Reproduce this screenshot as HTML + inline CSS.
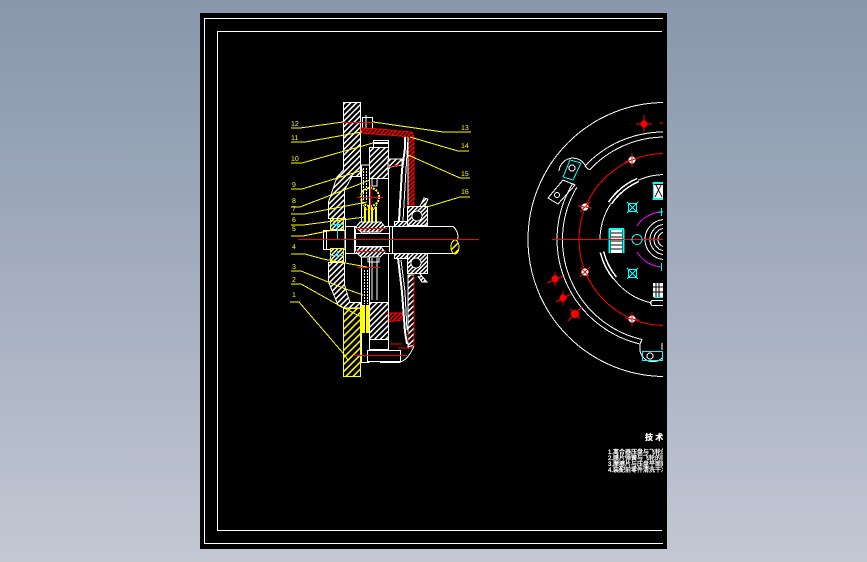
<!DOCTYPE html>
<html lang="zh">
<head>
<meta charset="utf-8">
<title>CAD drawing</title>
<style>
html,body{margin:0;padding:0;width:867px;height:562px;overflow:hidden;background:linear-gradient(180deg,#8897ac 0%,#a4aebf 50%,#c3c8d3 100%);}
svg{position:absolute;left:0;top:0;display:block;shape-rendering:crispEdges;}
text{font-family:"Liberation Sans","Noto Sans CJK SC",sans-serif;}
</style>
</head>
<body>
<svg width="867" height="562" viewBox="0 0 867 562" xmlns="http://www.w3.org/2000/svg">
<defs>
<pattern id="hw" width="4" height="4" patternUnits="userSpaceOnUse" patternTransform="rotate(45)"><rect width="4" height="4" fill="#000"/><rect width="1.400" height="4" fill="#fff"/></pattern>
<pattern id="hy" width="5" height="5" patternUnits="userSpaceOnUse" patternTransform="rotate(45)"><rect width="5" height="5" fill="#000"/><rect width="1.400" height="5" fill="#ff0"/></pattern>
<pattern id="hd" width="3" height="3" patternUnits="userSpaceOnUse" patternTransform="rotate(45)"><rect width="3" height="3" fill="#000"/><rect width="1.500" height="3" fill="#fff"/></pattern>
<pattern id="hr" width="3" height="3" patternUnits="userSpaceOnUse" patternTransform="rotate(45)"><rect width="3" height="3" fill="#000"/><rect width="1.500" height="3" fill="#f00"/></pattern>
<clipPath id="c"><rect x="200" y="13" width="463" height="536"/></clipPath>
</defs>

<rect x="200" y="13" width="467" height="536" fill="#000"/>
<g fill="none" stroke="#fff" stroke-width="1">
<path d="M663 18.500H204.500V543.500H663"/>
<path d="M662 31.500H217.500V530.500H662"/>
</g>

<!-- LEFT SECTION -->
<g fill="none" stroke="#fff" stroke-width="1">
<!-- flywheel -->
<path d="M343.500 102.500H360.500V176.500H352L344.500 190V218.500H328.500V202L337 177L343.500 170Z" fill="url(#hw)"/>
<path d="M328.500 262.500H344.500V285L350 302.500H360.500V308H343.500L338 305L328.500 282Z" fill="url(#hw)"/>
<rect x="343.500" y="308.500" width="17" height="68" fill="url(#hy)" stroke="#ff0"/>
<!-- bolt at top -->
<path d="M362.500 117.500H372.500V128.500H362.500Z M366 115V129"/>
<!-- cover -->
<path d="M361 128L380 129L398 131L412 132L414 137V205H408V137L400 136L361 133Z" fill="url(#hr)" stroke="#f00"/>
<path d="M408 205V137"/>
<path d="M408 275H414V345L408 347Z" fill="url(#hw)"/>
<path d="M414 275V345L411 348H398M408 332V342M390 344H402" stroke="#f00"/>
<path d="M367.500 350.500H400.500V361.500H367.500ZM380 362.500H400M400 362Q408 360 414 346"/>
<!-- pressure plate -->
<rect x="369.500" y="147.500" width="19" height="31" fill="url(#hw)"/>
<rect x="373.500" y="140.500" width="15" height="7"/>
<path d="M373.500 143H388.500" stroke-width="2"/>
<path d="M388 159H402V165L390 167L388 170Z" fill="url(#hw)"/>
<path d="M388 167L400 165" stroke="#f00"/>
<rect x="369.500" y="302.500" width="19" height="37" fill="url(#hw)"/>
<rect x="369.500" y="339.500" width="19" height="10"/>
<path d="M388 313H402V320L388 322Z" fill="url(#hr)" stroke="#f00"/>
<!-- verticals -->
<path d="M361.500 165V362.500H369.500M369.500 178V302M388.500 178V226M388.500 253V350M361.500 165H369.500"/>
<path d="M363.500 168V200M366.500 168V200M369.500 168V200" stroke-dasharray="2 1"/>
<path d="M364.500 270V304M367.500 270V304" stroke-dasharray="2 1"/>
<path d="M372 178V186H377V178M372 258V300M377 258V300"/>
<path d="M368 258V262H379V258"/>
<!-- yellow springs -->
<rect x="361" y="305" width="4" height="28" fill="#ff0" stroke="none"/>
<rect x="366" y="305" width="3" height="28" fill="#ff0" stroke="none"/>
<circle cx="370" cy="197" r="9" stroke="#ff0" stroke-width="2" stroke-dasharray="2 1"/>
<path d="M365 207V223H369V207M372 207V223H376V207" stroke="#ff0" stroke-width="2"/>
<path d="M363 205L367 210M377 205L373 210" stroke="#ff0"/>
<!-- diaphragm -->
<path d="M405 137V148L402 170L399 221" stroke-width="2"/>
<path d="M408 138L406 170L403 221"/>
<path d="M398 258L402 292L405 332L407 344" stroke-width="2"/>
<path d="M401 260L405 292L407 330"/>
<!-- bearing -->
<rect x="407.500" y="206.500" width="20" height="19" fill="url(#hd)"/>
<circle cx="417" cy="216" r="5" fill="#000"/>
<path d="M420 206L424 198L428 199L425 206" fill="url(#hd)"/>
<rect x="407.500" y="253.500" width="20" height="20" fill="url(#hd)"/>
<circle cx="416" cy="263" r="5" fill="#000"/>
<path d="M420 274L427 282H422L418 276" fill="url(#hd)"/>
<rect x="394.500" y="221.500" width="13" height="5" fill="url(#hd)"/>
<rect x="394.500" y="253.500" width="13" height="5" fill="url(#hd)"/>
<!-- shaft -->
<path d="M345 226.500H453C458 231 459 236 457 241M345 253.500H453L458 247"/>
<path d="M323.500 230.500V249.500H345V230.500H323.500ZM326.500 230.500V249"/>
<path d="M345.500 218V262M354.500 226V253M392.500 226V253"/>
<!-- hub -->
<path d="M356 227L360 222H381L385 227L380 232H361Z" fill="url(#hd)"/>
<path d="M356 252L360 247H381L385 252L380 257H361Z" fill="url(#hd)"/>
<rect x="356" y="233" width="33" height="13" fill="#000" stroke="none"/>
<path d="M355.500 227V252M389.500 227V252"/>
<path d="M355 233.500H389M355 246.500H389"/>
<!-- small boxes -->
<rect x="330.500" y="218.500" width="13" height="11" fill="url(#hd)" stroke="#ff0"/>
<rect x="330.500" y="248.500" width="13" height="13" fill="url(#hd)" stroke="#ff0"/>
<!-- shaft yellow end -->
<ellipse cx="455" cy="247" rx="4" ry="7" fill="url(#hy)" stroke="#ff0"/>
</g>

<!-- centre lines -->
<g fill="none" stroke="#f00" stroke-width="1">
<path d="M298 239.500H479"/>
<path d="M338 122.500H373"/>
<path d="M357 197.500H383M370.500 185V210"/>
<path d="M357 267.500H380"/>
<path d="M355 228.500H387M355 251.500H386"/>
<path d="M353 355.500H407"/>
</g>
<g fill="none" stroke="#0ff" stroke-width="1">
<path d="M337.500 221V239M330 224.500H344M337.500 251V259M330 255.500H344"/>
</g>

<!-- leaders -->
<g fill="none" stroke="#ff0" stroke-width="1">
<path d="M291 128H300L343 122"/>
<path d="M373 122L443 132H471"/>
<path d="M291 142H305L362 132"/>
<path d="M410 137L458 151H469"/>
<path d="M291 163H302L373 143"/>
<path d="M408 155L460 178H470"/>
<path d="M291 189H302L363 170"/>
<path d="M291 207H300L370 180"/>
<path d="M291 214H304L367 202"/>
<path d="M291 225H303L365 217"/>
<path d="M291 236H303L333 230"/>
<path d="M427 207L460 197H470"/>
<path d="M291 254H305L323 259L367 267"/>
<path d="M291 271H301L343 288L363 295"/>
<path d="M291 284H301L333 302L363 318"/>
<path d="M290 302H299L343 353L348 360"/>
</g>
<g fill="#ff0" font-size="7" style="text-rendering:geometricPrecision">
<text x="291" y="126">12</text>
<text x="291" y="140">11</text>
<text x="291" y="161">10</text>
<text x="292" y="187">9</text>
<text x="292" y="203">8</text>
<text x="292" y="211">7</text>
<text x="292" y="222">6</text>
<text x="292" y="231">5</text>
<text x="292" y="249">4</text>
<text x="292" y="269">3</text>
<text x="292" y="282">2</text>
<text x="292" y="297">1</text>
<text x="461" y="130">13</text>
<text x="461" y="148">14</text>
<text x="461" y="176">15</text>
<text x="461" y="194">16</text>
</g>

<!-- RIGHT VIEW -->
<g clip-path="url(#c)" fill="none" stroke-width="1">
<g stroke="#fff">
<circle cx="665" cy="239.500" r="137"/>
<path d="M664 132A107.500 107.500 0 0 0 585 166L588 169L590 169.500A102.500 102.500 0 0 1 664 137"/>
<path d="M573 183A107.500 107.500 0 0 0 640 344V347M577 187A102.500 102.500 0 0 0 642 339.500L640 344"/>
<path d="M559 171A14 14 0 0 1 585 165"/>
<path d="M640 347A13 13 0 0 0 662 358M662 343V350"/>
<path d="M548 198L558 204L575 185L563 180Z"/>
<circle cx="572" cy="168" r="3"/>
<circle cx="557" cy="195" r="2.500"/>
<circle cx="650" cy="356" r="3"/>
<path d="M600 239.500A65 65 0 0 1 664 174.500"/>
<path d="M602 252A64 64 0 0 0 652 303"/>
<path d="M610 203A66 66 0 0 1 638 180" stroke-width="5"/>
<path d="M602 252A64 64 0 0 0 615 278" stroke-width="5"/>
<path d="M610 203A66 66 0 0 1 638 180" stroke="#000" stroke-width="2"/>
<path d="M602 252A64 64 0 0 0 615 278" stroke="#000" stroke-width="2"/>
<path d="M645 239.500A20 20 0 0 1 663 219.600M650 239.500A15 15 0 0 1 663 224.500M654 239.500A11 11 0 0 1 663 228.500M658 239.500A7 7 0 0 1 663 232.500"/>
<path d="M645 239.500A20 20 0 0 0 663 259.400M650 239.500A15 15 0 0 0 663 254.500M654 239.500A11 11 0 0 0 663 250.500M658 239.500A7 7 0 0 0 663 246.500"/>
<path d="M652 300.500H663M652 305.500H663M652 300.500Q649 303 652 305.500"/>
</g>
<g stroke="#f00">
<path d="M579 239.500A86 86 0 0 1 664 153.500"/>
<path d="M579 239.500A86 86 0 0 0 664 325.500"/>
<path d="M552 239.500H664"/>
</g>
<g stroke="#f0f">
<path d="M637 226A31 31 0 0 1 662 212"/>
<path d="M637 252A31 31 0 0 0 662 267"/>
</g>
<g stroke="#0ff">
<path d="M570 160L581 163L573 180L563 177Z"/>
<rect x="642.500" y="351.500" width="20" height="9"/>
<circle cx="637" cy="239.500" r="5"/>
<path d="M658 212H664M661.500 208V216M661.500 263V271"/>
<rect x="628.500" y="203.500" width="8" height="8"/>
<rect x="628.500" y="269.500" width="8" height="8"/>
<path d="M627 202L638 213M638 202L627 213M627 268L638 279M638 268L627 279"/>
<path d="M609.500 229V253M623.500 229V253" stroke-width="2"/>
<path d="M609 229H624M652.500 183H663M652.500 199H663M654 297H663" stroke-width="2"/>
<path d="M653.500 183V199"/>
</g>
</g>
<g clip-path="url(#c)">
<g fill="#fff">
<rect x="654" y="185" width="9" height="13"/>
<rect x="653" y="283" width="10" height="14"/>
<rect x="611" y="230" width="11" height="23"/>
</g>
<g stroke="#000" stroke-width="1" fill="none">
<path d="M656 185L662 197M661 185L655 197"/>
<path d="M653 287H663M656 283V297M659 283V297M653 292H663"/>
<path d="M611 233H622M611 237H622M611 241H622M611 245H622M611 249H622"/>
</g>
<rect x="608" y="239" width="16" height="1" fill="#f00"/>
<!-- bolts -->
<g fill="#f00" stroke="#f00" stroke-width="1">
<path d="M636 124H652M644 115V132" fill="none"/><circle cx="644" cy="124" r="3"/>
<path d="M660 123H664" fill="none"/>
<path d="M547 283L563 276M555 272V286" fill="none"/><circle cx="555" cy="279" r="3"/>
<path d="M556 302L571 294M563 291V305" fill="none"/><circle cx="563" cy="298" r="3"/>
<path d="M568 321L582 307M570 309L580 319" fill="none"/><circle cx="575" cy="314" r="3.500"/>
</g>
<g>
<circle cx="632" cy="160" r="3.500" fill="#fff"/><path d="M625 162L639 158M632 153V167" stroke="#f00" fill="none"/>
<circle cx="585" cy="207" r="3.500" fill="#fff"/><path d="M580 212L590 202M578 206L592 208" stroke="#f00" fill="none"/>
<circle cx="585" cy="272" r="3.500" fill="#fff"/><path d="M580 277L590 267M581 268L589 276" stroke="#f00" fill="none"/>
<circle cx="632" cy="319" r="3.500" fill="#fff"/><path d="M625 318L639 320M632 312V326" stroke="#f00" fill="none"/>
</g>
<!-- notes -->
<text x="645" y="440" fill="#fff" font-size="8" font-weight="bold" stroke="#fff" stroke-width=".3">技 术</text>
<g fill="#fff" font-size="6" stroke="#fff" stroke-width=".25">
<text x="608" y="454">1.离合器压盘与飞轮的平面度误差</text>
<text x="608" y="460">2.膜片弹簧与飞轮的同轴度误差</text>
<text x="608" y="466">3.摩擦片与压盘平面贴合度误差</text>
<text x="608" y="472">4.装配前零件清洗干净并涂润滑</text>
</g>
</g>
</svg>
</body>
</html>
